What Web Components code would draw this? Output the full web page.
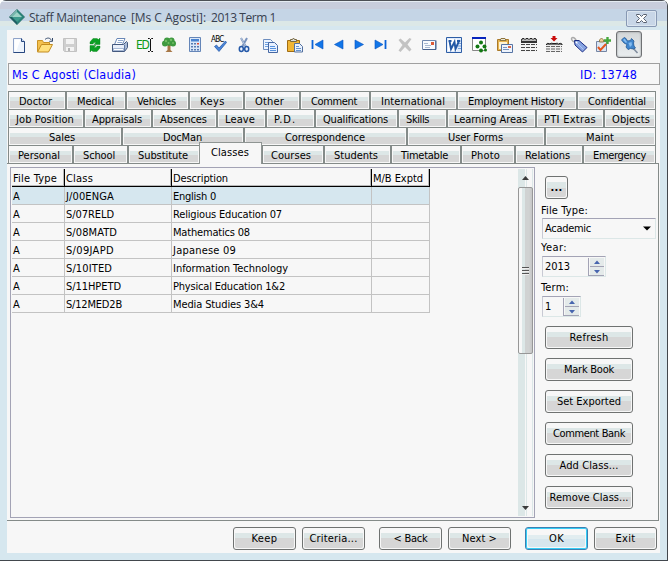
<!DOCTYPE html>
<html lang="en">
<head>
<meta charset="utf-8">
<title>Staff Maintenance</title>
<style>
html,body{margin:0;padding:0;background:#fff}
body{font:11px/14px "DejaVu Sans Condensed","DejaVu Sans","Noto Sans",sans-serif;font-stretch:condensed;color:#000;overflow:hidden}
</style>
</head>
<body>
<staff-window></staff-window>
<script>
const define = (name, html, setup) => {
  const tpl = document.createElement('template');
  tpl.innerHTML = html;
  customElements.define(name, class extends HTMLElement {
    connectedCallback() {
      if (this.shadowRoot) return;
      this.attachShadow({mode: 'open'}).append(tpl.content.cloneNode(true));
      if (setup) setup(this, this.shadowRoot);
    }
  });
};

const ICONS = {
  'new': '<path d="M4.500 3.500h8l3 3v11h-11z" fill="#eef4fc" stroke="#8fa3c8"/><path d="M5.500 4.500h6l-4 11h-2z" fill="#fff"/><path d="M15.500 6.500v11h-11" fill="none" stroke="#27477f"/><path d="M12.500 3.500v3h3" fill="#c9d8ef" stroke="#27477f"/>',
  open: '<path d="M2.500 16.500v-11h5l1 2h6v3" fill="#f3c04e" stroke="#c99225"/><path d="M2.500 17l4-7.500h11l-4 7.500z" fill="#ffe07d" stroke="#c28b20"/><path d="M10 4.500c2-2 5-2 6.500.8M17.500 3v3.300h-3.200" fill="none" stroke="#33496b"/>',
  save: '<path d="M3.500 3.500h13v13h-12l-1-1z" fill="#cfcfcf" stroke="#c2c2c2"/><path d="M6 4h8v5H6zM6 12h8v4H6z" fill="#f3f3f3"/><path d="M8 13h2v3H8z" fill="#b5b5b5"/>',
  refresh: '<path d="M5 9V7l3-3.500h4l1.500 1L15 3v6.500H9L11 7.500H9L8 9zM15 11v2l-3 3.500H8l-1.500-1L5 17v-6.500h6L9 12.500h2l1-1.500z" fill="#0ba023" stroke="#078018" stroke-width=".4"/>',
  print: '<path d="M7 3.500h8l-2.500 6h-8z" fill="#fff" stroke="#6987b7"/><path d="M8 5.500h5M7.300 7.500h5" stroke="#8fa8ce"/><path d="M2.500 9.500h11l3-3 1 1v5l-3 4h-12z" fill="#a9bad6" stroke="#44597f"/><path d="M3 10h11v3H3z" fill="#e9effa"/><path d="M4 14.500h9" stroke="#fff"/><path d="M14.500 10v6" stroke="#6078a2"/>',
  edit: '<path d="M14 3.500h1.500l1 1 1-1H19M14 16.500h1.500l1-1 1 1H19M16.500 4v12" fill="none" stroke="#111"/>',
  tree: '<path d="M8.500 10h3v5l2 2h-7l2-2z" fill="#a77746"/><path d="M10 10.500L7 8M10.500 11l3-3" stroke="#735026"/><g fill="#3f9a40"><circle cx="6" cy="8.500" r="3"/><circle cx="14" cy="8.500" r="3"/><circle cx="8" cy="5.500" r="3"/><circle cx="12.500" cy="5.500" r="3"/><circle cx="10" cy="8" r="2.800"/></g><g fill="#72bd65"><circle cx="7" cy="6" r="1.200"/><circle cx="12" cy="5" r="1.200"/><circle cx="14" cy="8" r="1"/><circle cx="9.500" cy="8" r="1"/></g>',
  calc: '<path d="M4.500 2.500h11v14h-11z" fill="#dce8f8" stroke="#6586b8"/><path d="M6 4h8v2.500H6z" fill="#4a83cf"/><g fill="#587bb0"><path d="M6 8h2v1.500H6zM9 8h2v1.500H9zM6 11h2v1.500H6zM9 11h2v1.500H9zM6 14h2v1.500H6zM9 14h2v1.500H9zM12 11h2v1.500h-2zM12 14h2v1.500h-2z"/></g><path d="M12 8h2v1.500h-2z" fill="#e34b38"/>',
  spell: '<path d="M5.500 11.500l2-1.500 2.500 3 6.500-7 1 1.500-7.500 9z" fill="#4a85d8" stroke="#2355a5" stroke-width=".7"/>',
  cut: '<path d="M7 3l5 9M13 3l-5 9" stroke="#7993bd" stroke-width="2"/><path d="M7 3l5 9" stroke="#b4c5de"/><ellipse cx="7.300" cy="14" rx="2" ry="2.500" fill="#edf3ff" stroke="#2559a8" stroke-width="1.500"/><ellipse cx="12.700" cy="14" rx="2" ry="2.500" fill="#edf3ff" stroke="#2559a8" stroke-width="1.500"/>',
  copy: '<path d="M3.500 4.500h7l2 2v8h-9z" fill="#eef5ff" stroke="#6d8dbe"/><path d="M5 7.500h4M5 9.500h4M5 11.500h4" stroke="#6fa0df"/><path d="M8.500 7.500h6l3 3v7h-9z" fill="#e7f0ff" stroke="#4668a3"/><path d="M10 11.500h5M10 13.500h6M10 15.500h6" stroke="#5591dd"/>',
  paste: '<path d="M2.500 5.500h12v11h-12z" fill="#f0b534" stroke="#a06c12"/><path d="M5.500 6.500v-2h2l1-1.500 1 1.500h2v2z" fill="#d9dce0" stroke="#77673d"/><path d="M9.500 8.500h5l3 3v5.500h-8z" fill="#e9f1fd" stroke="#53709f"/><path d="M11 11.500h3M11 13.500h5M11 15.500h5" stroke="#6693cf"/>',
  first: '<path d="M5.500 5v9" stroke="#0b63d8" stroke-width="1.800"/><path d="M16 5v9L8 9.500z" fill="#1276e8" stroke="#0752c0" stroke-width=".6"/>',
  prev: '<path d="M14 5v9L5.500 9.500z" fill="#1276e8" stroke="#0752c0" stroke-width=".6"/>',
  next: '<path d="M6 5v9l8.500-4.500z" fill="#1276e8" stroke="#0752c0" stroke-width=".6"/>',
  last: '<path d="M15.500 5v9" stroke="#0b63d8" stroke-width="1.800"/><path d="M5 5v9l8-4.500z" fill="#1276e8" stroke="#0752c0" stroke-width=".6"/>',
  del: '<path d="M3.500 5l2-1.500 4.500 4 4.500-4.500 2 1-4 5.500 4 5-2 2-4.500-4.500-4.500 5-2-1.500 4-5.500z" fill="#c3c3c3"/>',
  mail: '<path d="M3.500 5.500h13v9h-13z" fill="#f7fafe" stroke="#6e87ae"/><path d="M4 14.500h13v-9" fill="none" stroke="#455f8c"/><path d="M12 7h3v3h-3z" fill="#dd5a36"/><path d="M5 8.500h4M6 10.500h6M6 12.500h5" stroke="#a9b9d1"/>',
  word: '<path d="M2.500 2.500h15v15h-15z" fill="#e0ebfb" stroke="#2d5da5"/><path d="M4 4h9v12H4z" fill="#fff"/><path d="M14 6h3M14 8.500h3M14 11h3M14 13.500h3" stroke="#76a0d8"/><path d="M4.500 6h3M5.500 6l1.500 8 3.500-7 1 7 3.500-8M13 6h3" fill="none" stroke="#2459a6" stroke-width="1.900"/>',
  flow: '<path d="M3.500 2.500h13v13h-13z" fill="#fff" stroke="#888"/><path d="M3 2h14v2H3z" fill="#0724bd"/><g fill="#127812"><circle cx="12" cy="7.500" r="2"/><circle cx="8.500" cy="11.500" r="2"/><circle cx="15.500" cy="11.500" r="2"/><circle cx="12" cy="15.500" r="2"/><circle cx="16.500" cy="15" r="1.500"/></g>',
  clipmail: '<path d="M3.500 4.500h11v11h-11z" fill="#e7b551" stroke="#aa7a2b"/><path d="M6 5.500l1-2h4l1 2z" fill="#ece6d5" stroke="#8d753e"/><path d="M5 7h8v7H5z" fill="#fff3d2"/><path d="M7.500 9.500h11v8h-11z" fill="#eef4fd" stroke="#5674a4"/><path d="M14 11h3v2h-3z" fill="#dc6747"/><path d="M9 12.500h4M9 14.500h6" stroke="#7a94be"/>',
  sheet: '<path d="M2.500 5.500q0-2 1.500-2t2 1q.500-1 2-1t2 1q.500-1 2-1t2 1q.500-1 2-1 1.500 0 1.500 2v1h-15z" fill="#bbb" stroke="#111"/><path d="M2 6h16v2H2z" fill="#333"/><path d="M2 8h16v9H2z" fill="#f3f3f3"/><path d="M2 9.500h16M2 12.500h16M2 15.500h16" stroke="#444" stroke-dasharray="4 1"/>',
  sheetdown: '<path d="M2.500 10v-1q1-1.500 3.500 0 .500-1.500 3-.500h3q1-1 2.500.500 1.500-1.500 3.500 0v1z" fill="#ccc" stroke="#222"/><path d="M2 10h16v7H2z" fill="#eee"/><path d="M2 11.500h16M2 14h16M2 16.500h16" stroke="#666" stroke-dasharray="4 1"/><path d="M8.500 1h3v2h2L10 6.500 6.500 3h2z" fill="#c90b0b"/>',
  tag: '<path d="M6 7C3 7 1 2.500 4 2.500s3 4 5 6" fill="none" stroke="#aaa" stroke-width="1.500"/><path d="M5.500 5.500h4.500l8 7-4.500 4.500L6 10z" fill="#87a4e2" stroke="#1b2d84"/><path d="M7 7l7.500 7.500" stroke="#b0c4f2"/><circle cx="7.500" cy="7.500" r="1" fill="#fff"/>',
  task: '<path d="M3.500 6.500h10v10h-10z" fill="#dce6f4" stroke="#7485a3"/><path d="M6.500 7V5l2-2 2 2v2z" fill="#eed09a" stroke="#93804e"/><path d="M5 12l2.500 3L13 9" fill="none" stroke="#e3571e" stroke-width="2"/><path d="M14.500 2v7M11 5.500h7" stroke="#46a83d" stroke-width="2.400"/>',
  pin: '<path d="M13 12l5.500 6" stroke="#7f8c9d" stroke-width="1.600"/><path d="M2.500 5L5 2.500l2 1L8.500 6l3-.500 1-2L15 6l-.500 2 .500 3 1.500 2-2 1-3-.500-2.500 1L7 12l1-2.500-3-1.500z" fill="#3f85cd" stroke="#225995" stroke-width=".8"/><path d="M4 5l1.500-1.500L8 7 7 8zM9.500 8l3-1 .500 3-2 2z" fill="#84bcf0"/>',
  logo: '<path d="M10 1l8 8-8 8-8-8z" fill="#2b8178"/><path d="M10 1L2 9h8z" fill="#76b5ac"/><path d="M2 9h8v8z" fill="#1e5f63"/><path d="M10 4l5 5-5 5-5-5z" fill="#3e9b8d"/><path d="M10 4L5 9h10z" fill="#9ed2c6"/><path d="M10 1l8 8-8 8-8-8z" fill="none" stroke="#75999e" stroke-width=".7"/>'
};

/* Text run spaced to occupy the width given in w. */
define('fit-text', '<style>:host{display:inline-block;white-space:pre}span{display:inline-block}</style><span><slot></slot></span>', (el, root) => {
  const want = +el.getAttribute('w'), n = [...el.textContent].length;
  if (want) {
    const s = root.querySelector('span');
    s.style.letterSpacing = ((want + 1 - s.getBoundingClientRect().width) / n).toFixed(3) + 'px';
  }
});

define('tool-icon', `<style>:host{display:block;width:20px;height:20px;position:relative}svg{display:block}
b{position:absolute;font:8px/8px "DejaVu Sans Condensed","DejaVu Sans",sans-serif;font-stretch:condensed;left:2px;top:1px;letter-spacing:-.7px}
b.ed{font:12px/14px "DejaVu Sans Condensed","DejaVu Sans",sans-serif;font-stretch:condensed;color:#0b9a16;left:2px;top:3px;letter-spacing:-1.300px}
:host([pressed]){box-sizing:border-box;width:26px;height:27px;border:1px solid #6f7174;border-radius:3px;background:linear-gradient(#d3d6d8,#dfe3e5 50%,#e9edef);box-shadow:inset 0 0 2px #85888b;padding:3px 2px}</style><svg width="20" height="20" viewBox="0 0 20 20"></svg>`, (el, root) => {
  const k = el.getAttribute('kind');
  root.querySelector('svg').innerHTML = ICONS[k];
  if (k === 'spell') root.querySelector('svg').insertAdjacentHTML('afterend', '<b>ABC</b>');
  if (k === 'edit') root.querySelector('svg').insertAdjacentHTML('afterend', '<b class="ed">ED</b>');
});

define('push-button', `<style>:host{display:flex;box-sizing:border-box;height:23px;border:1px solid #6f7271;border-radius:3px;padding:1px;background:#f7f7f7}
div{flex:1;display:flex;justify-content:center;align-items:center;background:linear-gradient(#f7f7f7 0 4px,#dde7e7 4px 9px,#d6d6d6 9px);border-radius:2px;line-height:17px}
:host([primary]){border-color:#3c7fb1;box-shadow:inset 0 0 0 1px #35cdf6}
:host([primary]) div{background:linear-gradient(#f7f7f7 0 5px,#e1edf0 5px 9px,#d5e6ee 9px);margin:1px}
:host([dots]){height:23px;width:23px}:host([dots]) div{background:linear-gradient(#f7f7f7 0 4px,#dde7e7 4px 10px,#d6d6d6 10px);font-weight:bold}</style><div><slot></slot></div>`);

define('title-bar', `<style>:host{display:flex;align-items:flex-start;height:30px;box-sizing:border-box;padding:8px 10px 0 7px;color:#38414f;
background:linear-gradient(#4c4f55 0 1px,#e5ebf2 1px 2px,#c8cddc 2px 9px,#c5d5e6 9px 21px,#dce8e7 21px 26px,#d6e7ef 26px);font:12px/20px "Open Sans","Noto Sans",sans-serif;font-stretch:normal}
tool-icon{margin-right:2px}.a{margin-right:5px}.b{margin-right:5px}
.close{margin:2px 0 0 auto;width:29px;height:15px;border:1px solid #8798b3;border-radius:2px;background:#c8d6e7;box-shadow:inset 0 0 0 1px #dce6f0;display:grid;place-items:center}</style>
<tool-icon kind="logo"></tool-icon><fit-text class="a" w="96">Staff Maintenance</fit-text><fit-text class="b" w="74">[Ms C Agosti]:</fit-text><fit-text w="64">2013 Term 1</fit-text>
<div class="close"><svg width="13" height="11" viewBox="0 0 13 11"><path d="M1.500 1.500h3l2 2 2-2h3v1l-3 3 3 3v1h-3l-2-2-2 2h-3v-1l3-3-3-3z" fill="#fff" stroke="#596170"/></svg></div>`);

define('tool-bar', `<style>:host{display:grid;height:33px;box-sizing:border-box;padding:5px 0 0 2px;grid-template-columns:26px 25px 25px 25px 24px 25px 26px 24px 25px 26px 25px 22px 22px 20px 21px 25px 24px 25px 25px 25px 25px 25px 25px 24px 23px 26px}
tool-icon[pressed]{margin-top:-4px}</style>`, (el, root) => {
  for (const k of 'new open save refresh print edit tree calc spell cut copy paste first prev next last del mail word flow clipmail sheet sheetdown tag task pin'.split(' ')) {
    const i = document.createElement('tool-icon');
    i.setAttribute('kind', k);
    if (k === 'pin') i.setAttribute('pressed', '');
    root.append(i);
  }
});

define('person-bar', `<style>:host{display:flex;justify-content:space-between;box-sizing:border-box;height:22px;margin:0 0 0 1px;border:1px solid #a0a0a0;padding:0 22px 0 3px;font-size:12.500px;line-height:22px;color:#00f}</style>
<fit-text w="123">Ms C Agosti (Claudia)</fit-text><fit-text w="56">ID: 13748</fit-text>`);

/* Each tab: label, right edge, text start, text width (window coordinates). */
const TABS = [
  [['Doctor',66,19,32],['Medical',126,77,36],['Vehicles',189,137,38],['Keys',244,200,24],['Other',300,255,28],['Comment',370,311,45],['International',457,381,63],['Employment History',577,468,95],['Confidential',656,588,57]],
  [['Job Position',84,16,57],['Appraisals',152,92,49],['Absences',217,160,46],['Leave',266,225,29],['P.D.',315,274,21],['Qualifications',398,323,64],['Skills',447,406,22],['Learning Areas',536,454,72],['PTI Extras',604,544,51],['Objects',656,612,37]],
  [['Sales',122,49,25],['DocMan',244,163,38],['Correspondence',407,285,79],['User Forms',545,448,54],['Maint',656,586,27]],
  [['Personal',73,18,41],['School',128,83,31],['Substitute',200,138,49],['Classes',262,211,37],['Courses',324,271,39],['Students',391,334,43],['Timetable',461,401,46],['Photo',515,471,28],['Relations',583,525,44],['Emergency',656,593,52]]
];
define('tab-item', `<style>:host{display:block;box-sizing:border-box;height:18px;border:1px solid #848b89;border-bottom:0;padding:1px;line-height:17px;background:#f7f7f7}
div{height:15px;background:linear-gradient(#f7f7f7 0 4px,#dde7e7 4px 8px,#d6d6d6 8px)}
:host([active]){height:22px;margin-top:-3px;margin-left:-1px;border-color:#8f9593;padding:1px 0 0 2px;z-index:1;position:relative}:host([active]) div{background:none;line-height:18px}</style><div><slot></slot></div>`);
define('tab-rows', `<style>:host{display:block;padding:6px 0 0 1px}.row{display:flex;height:18px}</style>`, (el, root) => {
  for (const r of TABS) {
    const row = document.createElement('div');
    row.className = 'row';
    let x = 8;
    for (const [t, end, tx, w] of r) {
      const a = t === 'Classes';
      row.insertAdjacentHTML('beforeend', `<tab-item ${a ? 'active' : ''} style="width:${end - x + (a ? 1 : 0)}px"><fit-text w="${w}" style="margin-left:${tx - x - 2}px">${t}</fit-text></tab-item>`);
      x = end;
    }
    root.append(row);
  }
});

const ROWS = [
  [['J/00ENGA',47],['English 0',42]], [['S/07RELD',47],['Religious Education 07',108]], [['S/08MATD',50],['Mathematics 08',76]],
  [['S/09JAPD',47],['Japanese 09',62]], [['S/10ITED',45],['Information Technology',114]], [['S/11HPETD',54],['Physical Education 1&amp;2',111]], [['S/12MED2B',55],['Media Studies 3&amp;4',90]]
];
define('class-grid', `<style>:host{display:block;flex:1;padding:1px 0 0 1px}
.r{display:grid;width:418px;grid-template-columns:53px 107px 200px 58px;height:18px;line-height:19px}
.r>*{box-sizing:border-box;border-right:1px solid #c3c3c3;border-bottom:1px solid #c3c3c3;padding-left:1px;overflow:hidden;height:18px}
.h>*{border-color:#000;box-shadow:inset -1px -1px #b8b8b8}.sel{background:#d6e7ef}</style>
<div class="r h"><div><fit-text w="43">File Type</fit-text></div><div><fit-text w="26">Class</fit-text></div><div><fit-text w="54">Description</fit-text></div><div><fit-text w="49">M/B Exptd</fit-text></div></div><div id="rows"></div>`, (el, root) => {
  root.querySelector('#rows').innerHTML = ROWS.map(([c, d], i) => `<div class="r ${i ? '' : 'sel'}"><div><fit-text w="7">A</fit-text></div><div><fit-text w="${c[1]}">${c[0]}</fit-text></div><div><fit-text w="${d[1]}">${d[0]}</fit-text></div><div></div></div>`).join('');
});

define('scroll-bar', `<style>:host{display:flex;flex-direction:column;width:15px;margin:1px 1px 1px 0;background:linear-gradient(90deg,#dce7e7 0 7px,#f7f7f7 7px 8px,#dce7e7 8px 9px,#f7f7f7 9px 14px,#dce7e7 14px)}
svg{display:block}.thumb{box-sizing:border-box;height:167px;border:1px solid #979797;border-radius:2px;background:linear-gradient(90deg,#f7f7f7 0 3px,#dce7e7 3px 6px,#d0d2d2 6px 10px,#c5c5c5);display:grid;place-items:center}.down{margin-top:auto}</style>
<svg width="15" height="18"><path d="M4 11l3.500-4 3.500 4z" fill="#3c3c3c"/></svg><div class="thumb"><svg width="7" height="8"><path d="M0 .5h7M0 3.500h7M0 6.500h7" stroke="#555"/><path d="M0 1.500h7M0 4.500h7M0 7.500h7" stroke="#eee"/></svg></div><svg class="down" width="15" height="15"><path d="M4 5l3.500 4L11 5z" fill="#3c3c3c"/></svg>`);

define('combo-box', `<style>:host{display:flex;justify-content:space-between;align-items:center;box-sizing:border-box;width:114px;height:21px;border:1px solid #dce7e7;border-top-color:#a3a3b5;border-left-color:#c8c9d3;padding:0 4px 0 2px}</style><slot></slot><svg width="8" height="5"><path d="M0 .5h8L4 4.500z"/></svg>`);
define('spin-box', `<style>:host{display:flex;justify-content:space-between;box-sizing:border-box;height:21px;border:1px solid #dce7e7;border-top-color:#a3a3b5;border-left-color:#c8c9d3;padding:0 1px 0 2px;line-height:20px}
div{width:15px;height:17px;margin-top:1px;border-left:1px solid #a3a3b5;border-bottom:1px solid #a3a3b5;display:grid;grid-template-rows:8px 9px}
svg{display:block;background:#e4eaea;margin-left:1px}svg+svg{border-top:1px solid #a3a3b5}</style><slot></slot>
<div><svg width="14" height="8"><path d="M4 6l3-3.500L10 6z" fill="#4765ae"/></svg><svg width="14" height="8"><path d="M4 3l3 3.500L10 3z" fill="#4765ae"/></svg></div>`);

define('side-panel', `<style>:host{display:block;width:116px;padding:9px 0 0 6px;box-sizing:content-box}
.lab{display:block;height:14px;line-height:14px}push-button{width:88px;margin:0 0 9px 4px}push-button[dots]{width:23px;margin-bottom:5px}
combo-box{margin:0 0 2px 1px}.y{width:64px;margin:1px 0 4px 1px}.t{width:39px;margin:1px 0 9px 1px}</style>
<push-button dots><fit-text w="11">...</fit-text></push-button>
<span class="lab"><fit-text w="46">File Type:</fit-text></span><combo-box><fit-text w="45">Academic</fit-text></combo-box>
<span class="lab"><fit-text w="25">Year:</fit-text></span><spin-box class="y"><fit-text w="24">2013</fit-text></spin-box>
<span class="lab"><fit-text w="27">Term:</fit-text></span><spin-box class="t"><fit-text w="6">1</fit-text></spin-box>
<push-button><fit-text w="38">Refresh</fit-text></push-button><push-button><fit-text w="49">Mark Book</fit-text></push-button><push-button><fit-text w="63">Set Exported</fit-text></push-button><push-button><fit-text w="71">Comment Bank</fit-text></push-button><push-button><fit-text w="58">Add Class...</fit-text></push-button><push-button><fit-text w="78">Remove Class...</fit-text></push-button>`);

define('tab-page', `<style>:host{display:flex;box-sizing:border-box;width:652px;height:358px;border:1px solid #848b89;border-left:0;padding:3px 0 0 3px}
.panel{display:flex;box-sizing:border-box;width:525px;height:351px;border:1px solid #a3a3b5}</style><div class="panel"><class-grid></class-grid><scroll-bar></scroll-bar></div><side-panel></side-panel>`);

define('button-bar', `<style>:host{display:flex;padding:6px 0 0 226px;gap:6px}push-button{width:63px}.g{margin-left:8px}</style>
<push-button><fit-text w="25">Keep</fit-text></push-button><push-button><fit-text w="47">Criteria...</fit-text></push-button><push-button class="g"><fit-text w="33">&lt; Back</fit-text></push-button><push-button><fit-text w="34">Next &gt;</fit-text></push-button><push-button class="g" primary><fit-text w="14">OK</fit-text></push-button><push-button><fit-text w="19">Exit</fit-text></push-button>`);

define('staff-window', `<style>:host{display:block;box-sizing:border-box;width:668px;height:561px;border-right:1px solid #42474d;border-bottom:1px solid #42474d;border-radius:6px 6px 0 0;overflow:hidden;background:#d6e7ef}
main{display:block;box-sizing:border-box;margin:0 7px;height:523px;background:#f7f7f7}</style>
<title-bar></title-bar><main><tool-bar></tool-bar><person-bar></person-bar><tab-rows></tab-rows><tab-page></tab-page><button-bar></button-bar></main>`);
</script>
</body>
</html>
